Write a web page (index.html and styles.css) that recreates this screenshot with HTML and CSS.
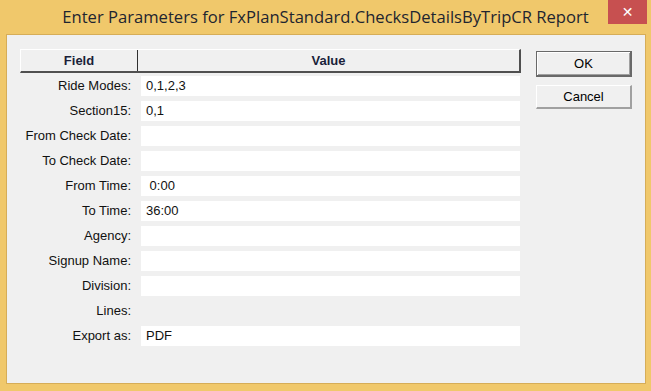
FILE: index.html
```html
<!DOCTYPE html>
<html>
<head>
    <title>Enter Parameters</title>
    <link rel="stylesheet" href="styles.css">
</head>
<body>

<div class="window">
    <div class="titlebar">
        <span class="title">Enter Parameters for FxPlanStandard.ChecksDetailsByTripCR Report</span>
        <div class="close">&#x2715;</div>
    </div>
    <div class="client">
        <div class="params">
            <div class="grid-head">
                <div class="head-field">Field</div>
                <div class="head-value">Value</div>
            </div>
            <div class="row"><div class="label">Ride Modes:</div><div class="value">0,1,2,3</div></div>
            <div class="row"><div class="label">Section15:</div><div class="value">0,1</div></div>
            <div class="row"><div class="label">From Check Date:</div><div class="value"></div></div>
            <div class="row"><div class="label">To Check Date:</div><div class="value"></div></div>
            <div class="row"><div class="label">From Time:</div><div class="value">&nbsp;0:00</div></div>
            <div class="row"><div class="label">To Time:</div><div class="value">36:00</div></div>
            <div class="row"><div class="label">Agency:</div><div class="value"></div></div>
            <div class="row"><div class="label">Signup Name:</div><div class="value"></div></div>
            <div class="row"><div class="label">Division:</div><div class="value"></div></div>
            <div class="row"><div class="label">Lines:</div></div>
            <div class="row"><div class="label">Export as:</div><div class="value">PDF</div></div>
        </div>
        <div class="buttons">
            <div class="btn btn-default">OK</div>
            <div class="btn">Cancel</div>
        </div>
    </div>
</div>

</body>
</html>
```

FILE: styles.css
```css
body {
    margin: 0;
    background-color: #f0c86b;
}
.window {
    width: 651px;
    height: 391px;
    background-color: #f0c86b;
    display: flex;
    flex-direction: column;
    position: relative;
}
.titlebar {
    height: 34px;
    display: flex;
    align-items: center;
    justify-content: center;
}
.title {
    font-family: 'Open Sans', sans-serif;
    font-size: 16.6px;
    color: #1e2530;
    margin-top: -1px;
}
.close {
    position: absolute;
    top: 0;
    right: 4px;
    width: 39px;
    height: 24px;
    background-color: #c75050;
    color: #fff;
    font-family: 'DejaVu Sans', sans-serif;
    font-weight: bold;
    font-size: 14px;
    display: flex;
    align-items: center;
    justify-content: center;
}
.client {
    margin: 0 5px 7px 6px;
    border: 1px solid #d6ad58;
    background-color: #f0f0f0;
    flex: 1;
    display: flex;
    padding: 14px 0 0 13px;
    font-family: 'Liberation Sans', Arial, sans-serif;
    font-size: 13px;
    color: #111;
}
.params {
    width: 501px;
}
.grid-head {
    display: flex;
    height: 24px;
    box-sizing: border-box;
    border-top: 1px solid #fff;
    border-left: 1px solid #fff;
    border-bottom: 2px solid #505050;
    border-right: 2px solid #505050;
    font-weight: bold;
    color: #1a1f3a;
    margin-bottom: 3px;
}
.head-field {
    width: 116px;
    border-right: 1px solid #303030;
    text-align: center;
    line-height: 21px;
}
.head-value {
    flex: 1;
    text-align: center;
    line-height: 21px;
}
.row {
    display: flex;
    height: 20px;
    margin-bottom: 5px;
    line-height: 20px;
}
.label {
    width: 111px;
    padding-right: 10px;
    text-align: right;
}
.value {
    width: 374px;
    background-color: #fff;
    padding-left: 5px;
}
.buttons {
    margin-left: 15px;
    padding-top: 2px;
    display: flex;
    flex-direction: column;
    gap: 8px;
}
.btn {
    width: 96px;
    height: 24px;
    box-sizing: border-box;
    border-top: 1px solid #fff;
    border-left: 1px solid #fff;
    border-right: 2px solid #a0a0a0;
    border-bottom: 2px solid #a0a0a0;
    background-color: #f0f0f0;
    text-align: center;
    line-height: 21px;
    color: #000;
}
.btn-default {
    height: 26px;
    border: 1px solid #696969;
    border-right-width: 2px;
    border-bottom-width: 2px;
    box-shadow: inset 1px 1px 0 #fff, inset -1px -1px 0 #a0a0a0;
    line-height: 23px;
}
```
